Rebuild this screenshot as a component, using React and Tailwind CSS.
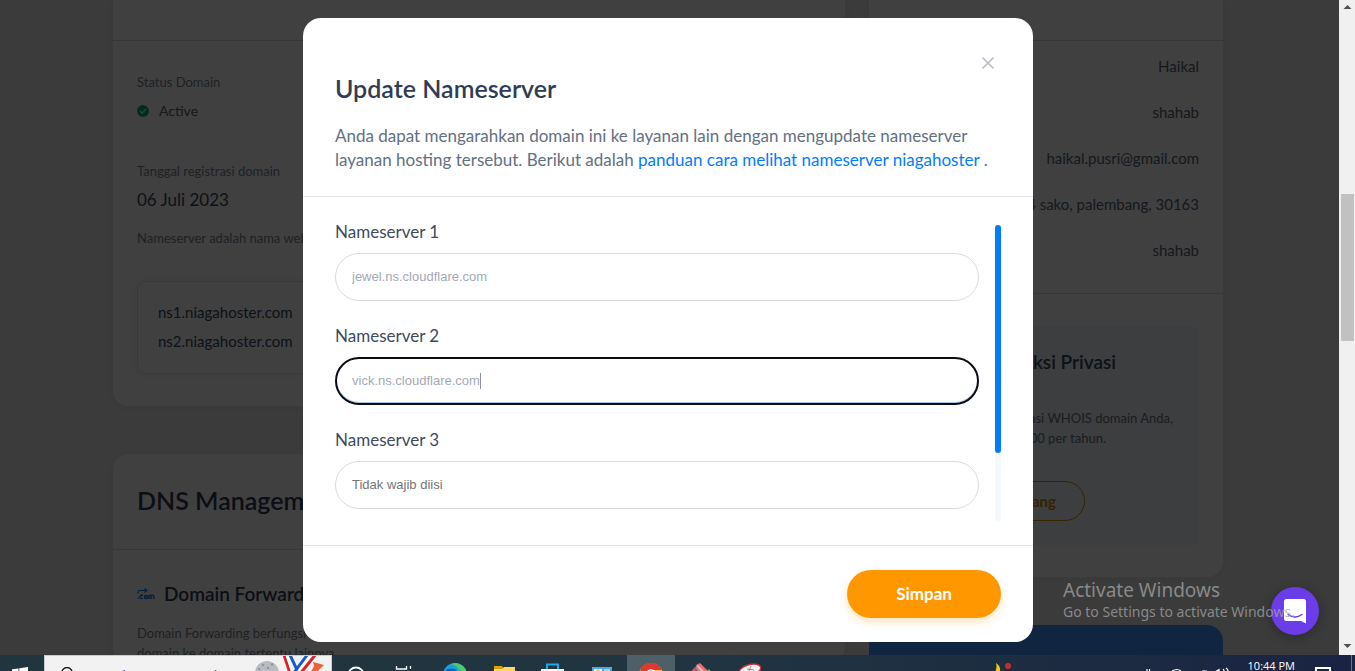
import { useState } from "react";

const contacts = [
  "Haikal",
  "shahab",
  "haikal.pusri@gmail.com",
  "jalan 4 sako, palembang, 30163",
  "shahab",
];

function CheckBadge() {
  return (
    <svg viewBox="0 0 12 12" className="size-3" aria-hidden="true">
      <circle cx="6" cy="6" r="6" fill="#00b67a" />
      <path d="M3.2 6.2l2 1.9 3.7-3.9" fill="none" stroke="#fff" strokeWidth="1.2" />
    </svg>
  );
}

function ForwardIcon() {
  return (
    <svg viewBox="0 0 18 12" className="h-3 w-[18px]" aria-hidden="true">
      <path d="M1 5.5V4q0-1.5 1.500-1.500H10M7.500 .5l2.300 2-2.300 2" fill="none" stroke="#1d7be0" strokeWidth="1.200" />
      <g fill="none" stroke="#1d7be0" strokeWidth="1.500">
        <path d="M.6 10.300h1.200M5.800 7.700a1.600 1.600 0 1 0 0 2.300M12 10.900V8.300q0-1 1-1t1 1v2.600M14 8.300q0-1 1.400-1t1.400 1v2.600" />
        <circle cx="9" cy="8.900" r="1.500" />
      </g>
    </svg>
  );
}

function LeftColumn() {
  return (
    <div className="flex min-w-0 flex-1 flex-col gap-12">
      <section className="rounded-b-2xl bg-white shadow-[0_0_16px_rgba(120,140,130,0.14)]">
        <div className="h-[41px] border-b border-[#d8dade]" />
        <div className="flex flex-col px-6 pb-8 pt-[31px] leading-5">
          <p className="text-[13px] text-[#7d8490]">Status Domain</p>
          <p className="mt-[9px] flex items-center gap-[10px] text-sm leading-5 text-[#566176]">
            <CheckBadge />
            Active
          </p>
          <p className="mt-10 text-[13px] text-[#7d8490]">Tanggal registrasi domain</p>
          <p className="mt-[9px] text-[17px] text-[#39465c]">06 Juli 2023</p>
          <p className="mt-[18px] text-[13px] text-[#7d8490]">Nameserver adalah nama website</p>
          <ul className="mt-[33px] flex flex-col gap-[9px] rounded-lg border border-[#dde2e5] px-5 pb-[22px] pt-5 text-[15px] text-[#39465c] shadow-[0_0_12px_rgba(120,140,130,0.1)]">
            <li>ns1.niagahoster.com</li>
            <li>ns2.niagahoster.com</li>
          </ul>
        </div>
      </section>
      <section className="rounded-2xl bg-white shadow-[0_0_16px_rgba(120,140,130,0.14)]">
        <div className="flex h-24 items-center border-b border-[#d8dade] px-6 pb-1">
          <h2 className="text-[25px] leading-[30px] font-semibold text-[#2f3c54]">DNS Management</h2>
        </div>
        <div className="px-6 pt-8">
          <h3 className="flex items-center gap-[9px] text-[19px] leading-6 font-semibold text-[#2f3c54]">
            <ForwardIcon />
            Domain Forwarding
          </h3>
          <p className="mt-[17px] text-[13px] leading-5 text-[#7d8490]">
            Domain Forwarding berfungsi untuk
            <br />
            domain ke domain tertentu lainnya
          </p>
        </div>
      </section>
    </div>
  );
}

function RightColumn() {
  return (
    <div className="flex w-[354px] flex-col gap-12">
      <section className="rounded-b-2xl bg-white shadow-[0_0_16px_rgba(120,140,130,0.14)]">
        <div className="h-[41px] border-b border-[#d8dade]" />
        <ul className="flex flex-col gap-[26px] border-b border-[#d8dade] px-6 pb-[33px] pt-[15px] text-right text-[15px] leading-5 text-[#566176]">
          {contacts.map((value, i) => (
            <li key={i}>{value}</li>
          ))}
        </ul>
        <div className="p-6 py-8">
          <div className="rounded-lg bg-[#f2f6fa] py-6 text-right">
            <h3 className="pr-[83px] text-[19px] leading-6 font-semibold text-[#39465c]">Proteksi Privasi</h3>
            <p className="mt-[34px] pr-[26px] text-[13px] leading-5 text-[#6a7382]">informasi WHOIS domain Anda,</p>
            <p className="pr-[93px] text-[13px] leading-5 text-[#6a7382]">hanya Rp50.000 per tahun.</p>
            <div className="mt-[33px] flex justify-end pr-[114px]">
              <button className="h-10 rounded-full border border-[#e08600] px-7 text-[15px] font-bold text-[#e08600]">
                Aktifkan Sekarang
              </button>
            </div>
          </div>
        </div>
      </section>
      <section className="h-24 rounded-2xl bg-[#3c94ff]" />
    </div>
  );
}

function Field({ index, value, placeholder, focused }) {
  const id = "nameserver-" + index;
  const [text, setText] = useState(value);
  return (
    <div className="flex flex-col gap-[10px]">
      <label htmlFor={id} className="text-[17px] leading-[22px] text-[#3d4a60]">
        Nameserver {index}
      </label>
      <div
        className={
          focused
            ? "flex h-12 items-center rounded-full border-2 border-[#0a0d12] px-[15px] shadow-[inset_0_-1px_0_#a9c8e8]"
            : "flex h-12 items-center rounded-full border border-[#dcdcdc] px-4"
        }
      >
        <input
          id={id}
          type="text"
          value={text}
          placeholder={placeholder}
          onChange={(e) => setText(e.target.value)}
          className={
            "bg-transparent font-['Liberation_Sans',sans-serif] text-[13px] text-[#a3a9b5] outline-none placeholder:text-[#757575] " +
            (focused ? "field-sizing-content" : "w-full")
          }
        />
        {focused && <span className="h-4 w-px bg-[#8d94a3]" />}
      </div>
    </div>
  );
}

function NameserverDialog() {
  return (
    <div
      role="dialog"
      aria-labelledby="dialog-title"
      className="relative w-full max-w-[730px] rounded-[18px] bg-white"
    >
      <header className="border-b border-[#e2e6eb] px-8 pb-6 pt-[55px]">
        <h1 id="dialog-title" className="text-[25px] leading-[30px] font-semibold text-[#2f3c54]">
          Update Nameserver
        </h1>
        <p className="mt-[21px] text-[17px] leading-6 text-[#627084]">
          Anda dapat mengarahkan domain ini ke layanan lain dengan mengupdate nameserver layanan hosting tersebut. Berikut adalah{" "}
          <a href="#panduan" className="text-[#007dff]">
            panduan cara melihat nameserver niagahoster
          </a>{" "}
          .
        </p>
        <button aria-label="Tutup" className="absolute right-[33px] top-[33px] flex size-6 items-center justify-center">
          <svg viewBox="0 0 12 12" className="size-3" fill="none" stroke="#bcc1ca" strokeWidth="1.6">
            <path d="M.5.5l11 11M11.500.5l-11 11" />
          </svg>
        </button>
      </header>
      <div className="px-8 py-6">
        <div className="flex h-[300px] gap-4 overflow-hidden">
          <form className="flex flex-1 flex-col gap-6">
            <Field index={1} value="jewel.ns.cloudflare.com" />
            <Field index={2} value="vick.ns.cloudflare.com" focused />
            <Field index={3} value="" placeholder="Tidak wajib diisi" />
          </form>
          <div className="mt-1 w-[6px] rounded-full bg-[#f4f9fe]">
            <div className="h-[228px] rounded-full bg-[#007dff]" />
          </div>
        </div>
      </div>
      <footer className="flex justify-end border-t border-[#e2e6eb] px-8 py-6">
        <button className="h-12 w-[154px] rounded-full bg-[#ff9800] text-[17px] font-bold text-white shadow-[0_4px_8px_rgba(255,152,0,0.25)]">
          Simpan
        </button>
      </footer>
    </div>
  );
}

function PageScrollbar() {
  return (
    <div className="flex w-4 flex-col bg-[#f0f0f0] px-px pl-[2px]">
      <svg viewBox="0 0 13 14" className="h-[14px] w-[13px]" fill="#505050" aria-hidden="true">
        <path d="M2.500 9l4-4 4 4z" />
      </svg>
      <div className="mt-[180px] h-[147px] bg-[#c1c1c1]" />
      <svg viewBox="0 0 13 14" className="mt-auto mb-[2px] h-[14px] w-[13px]" fill="#505050" aria-hidden="true">
        <path d="M2.500 5l4 4 4-4z" />
      </svg>
    </div>
  );
}

function TaskIcon({ children, active }) {
  return (
    <div className={"flex h-10 w-12 items-center justify-center " + (active ? "bg-[#4d5f67]" : "")}>
      <svg viewBox="0 0 24 24" className="size-6" aria-hidden="true">
        {children}
      </svg>
    </div>
  );
}

function Taskbar() {
  return (
    <div className="h-4 shrink-0 overflow-hidden">
      <div className="flex h-10 bg-linear-to-r from-[#21353e] via-[#213541] to-[#1a2442]">
        <div className="flex w-11 items-center justify-end pr-4">
          <svg viewBox="0 0 16 16" className="size-4" fill="#fff" aria-hidden="true">
            <path d="M0 2.300L6.500 1.400V7.500H0zM7.300 1.300L16 0v7.500H7.300zM0 8.300h6.500v6.200L0 13.600zM7.300 8.300H16V16l-8.700-1.300z" />
          </svg>
        </div>
        <div className="flex w-[288px] items-center border-x border-t border-[#c9cccd] bg-[#f2f2f2] pl-[14px] font-['Open_Sans',sans-serif] text-[15px] text-[#444]">
          <svg viewBox="0 0 18 18" className="size-[18px]" fill="none" stroke="#111" strokeWidth="1.400" aria-hidden="true">
            <circle cx="8" cy="5.800" r="5.200" />
            <path d="M4 9.500l-4 4" />
          </svg>
          <span className="ml-2">Type here to search</span>
          <svg viewBox="0 0 74 40" className="ml-auto mr-1 h-10 w-[74px]" aria-hidden="true">
            <circle cx="14" cy="17" r="12" fill="#b9bcc3" />
            <g fill="#8f939b">
              <circle cx="10" cy="9" r="1.200" />
              <circle cx="15" cy="12" r="1.200" />
              <circle cx="19" cy="8.500" r="1.200" />
              <circle cx="6" cy="13" r="1.200" />
            </g>
            <path d="M31-1l8 24" stroke="#d8232a" strokeWidth="3" />
            <path d="M34-1l8 24" stroke="#fff" strokeWidth="3" />
            <path d="M37-1l9 19" stroke="#145cc8" strokeWidth="3" />
            <path d="M55-2L40 18" stroke="#145cc8" strokeWidth="3" />
            <path d="M58.500-2L43.500 18" stroke="#fff" strokeWidth="2.500" />
            <path d="M63-2L47 18" stroke="#d8232a" strokeWidth="3" />
            <path d="M60 6l11 3-4 4-8 7-2-2 4-8z" fill="#e8623a" />
          </svg>
        </div>
        <TaskIcon>
          <circle cx="12" cy="12" r="7.500" fill="none" stroke="#fff" strokeWidth="1.800" />
        </TaskIcon>
        <TaskIcon>
          <path d="M4.500 3v3h10V3M18.500 3v3" fill="none" stroke="#fff" strokeWidth="1.300" />
        </TaskIcon>
        <div className="ml-[3px] flex gap-px">
          <TaskIcon>
            <circle cx="12" cy="12" r="12" fill="#1b9de2" />
            <path d="M12 0a12 12 0 0 1 12 12H14Q20 5 8 1z" fill="#4cc96a" />
            <path d="M0 12Q2 4 12 6l3 6z" fill="#0c62b4" />
          </TaskIcon>
          <TaskIcon>
            <path d="M2 3h8l2 3v4H2z" fill="#e0a100" />
            <path d="M2 6h21v15H2z" fill="#ffd766" />
            <path d="M2 6h8l2-2h11v3H2z" fill="#ffd766" />
          </TaskIcon>
          <TaskIcon>
            <path d="M6 7V1.500h11V7" fill="none" stroke="#22a7f0" strokeWidth="2" />
            <path d="M0 6h23v16H0z" fill="#fff" />
          </TaskIcon>
          <TaskIcon>
            <path d="M2 4h20v16H2z" fill="#4aa9e0" />
            <path d="M4 6h8v6H4z" fill="#e8f5ff" />
            <path d="M14 7h6M14 9h6" stroke="#fff" />
            <circle cx="8" cy="8" r="2" fill="#ffc93c" />
          </TaskIcon>
          <TaskIcon active>
            <circle cx="12" cy="12" r="12" fill="#f7c531" />
            <path d="M1 7A12 12 0 0 1 23 7H12L6 13z" fill="#dd3a2d" />
            <circle cx="12" cy="12" r="5.800" fill="#fff" />
            <circle cx="12" cy="12" r="4.500" fill="#3f82ea" />
          </TaskIcon>
          <TaskIcon>
            <path d="M8 2l4-2 8 8-5 3z" fill="#ee6a70" />
            <path d="M7 4l3-2 8 8H11z" fill="#fff" opacity=".5" />
            <path d="M2 9l5-5 5 6z" fill="#c9505c" />
            <path d="M17 9l4-3 3 4z" fill="#69b34c" />
          </TaskIcon>
          <TaskIcon>
            <ellipse cx="13" cy="7" rx="11" ry="5.500" transform="rotate(-15 13 7)" fill="#f4f4f4" stroke="#c9303c" strokeWidth="1.500" />
            <path d="M10 6l7 1M14 3l-2 5" stroke="#777" strokeWidth=".8" />
          </TaskIcon>
        </div>
        <div className="ml-auto flex items-start text-white">
          <svg viewBox="0 0 24 40" className="mr-[130px] h-10 w-6" aria-hidden="true">
            <path d="M8 8q5 3 4 9l-8 3q6-5 4-12z" fill="#fcc419" />
            <circle cx="20" cy="11" r="3" fill="#c92a2a" />
          </svg>
          <svg viewBox="0 0 94 40" className="mr-3 h-10 w-[94px]" fill="none" stroke="#fff" strokeWidth="1.200" aria-hidden="true">
            <path d="M5 14v3M7.500 14v3M30 16q5-3 9 0M60 16h5M73 17l4-2.500V20M81 14q2 2 1 5M84 13q3 2 2 6" />
          </svg>
          <span className="font-['Open_Sans',sans-serif] text-[11px] leading-[22px]">10:44 PM</span>
          <svg viewBox="0 0 16 28" className="ml-5 mr-5 h-7 w-4" aria-hidden="true">
            <path d="M1 13h14v14H1z" fill="none" stroke="#fff" strokeWidth="2" />
          </svg>
          <div className="mr-[3px] h-10 w-px bg-[#6b7389]" />
        </div>
      </div>
    </div>
  );
}

export default function App() {
  return (
    <div className="flex h-screen flex-col overflow-hidden font-['Lato',sans-serif]">
      <div className="flex min-h-0 flex-1">
        <main className="relative min-w-0 flex-1 overflow-hidden bg-[#ececec] pr-[3px]">
          <div className="mx-auto flex max-w-[1110px] gap-6">
            <LeftColumn />
            <RightColumn />
          </div>
          <div className="absolute inset-0 flex items-start justify-center bg-black/75 pr-[3px] pt-[18px]">
            <NameserverDialog />
          </div>
          <button
            aria-label="Chat"
            className="absolute bottom-5 right-5 flex size-12 items-center justify-center rounded-full bg-[#6b3de8] shadow-[0_2px_12px_rgba(0,0,0,0.3)]"
          >
            <svg viewBox="0 0 22 25" className="h-[25px] w-[22px]" aria-hidden="true">
              <path d="M2.500 0h17Q22 0 22 2.500V24.500L17 22H2.500Q0 22 0 19.500v-17Q0 0 2.500 0z" fill="#fff" />
              <path d="M4 15.500q7 5 14 0" fill="none" stroke="#6b3de8" strokeWidth="1.500" strokeLinecap="round" />
            </svg>
          </button>
          <div className="pointer-events-none absolute bottom-[33px] right-10 w-[236px] font-['Noto_Sans',sans-serif] whitespace-nowrap text-[#a5a5a5]/75">
            <p className="text-[19px] leading-6">Activate Windows</p>
            <p className="text-sm leading-5">Go to Settings to activate Windows.</p>
          </div>
        </main>
        <PageScrollbar />
      </div>
      <Taskbar />
    </div>
  );
}
